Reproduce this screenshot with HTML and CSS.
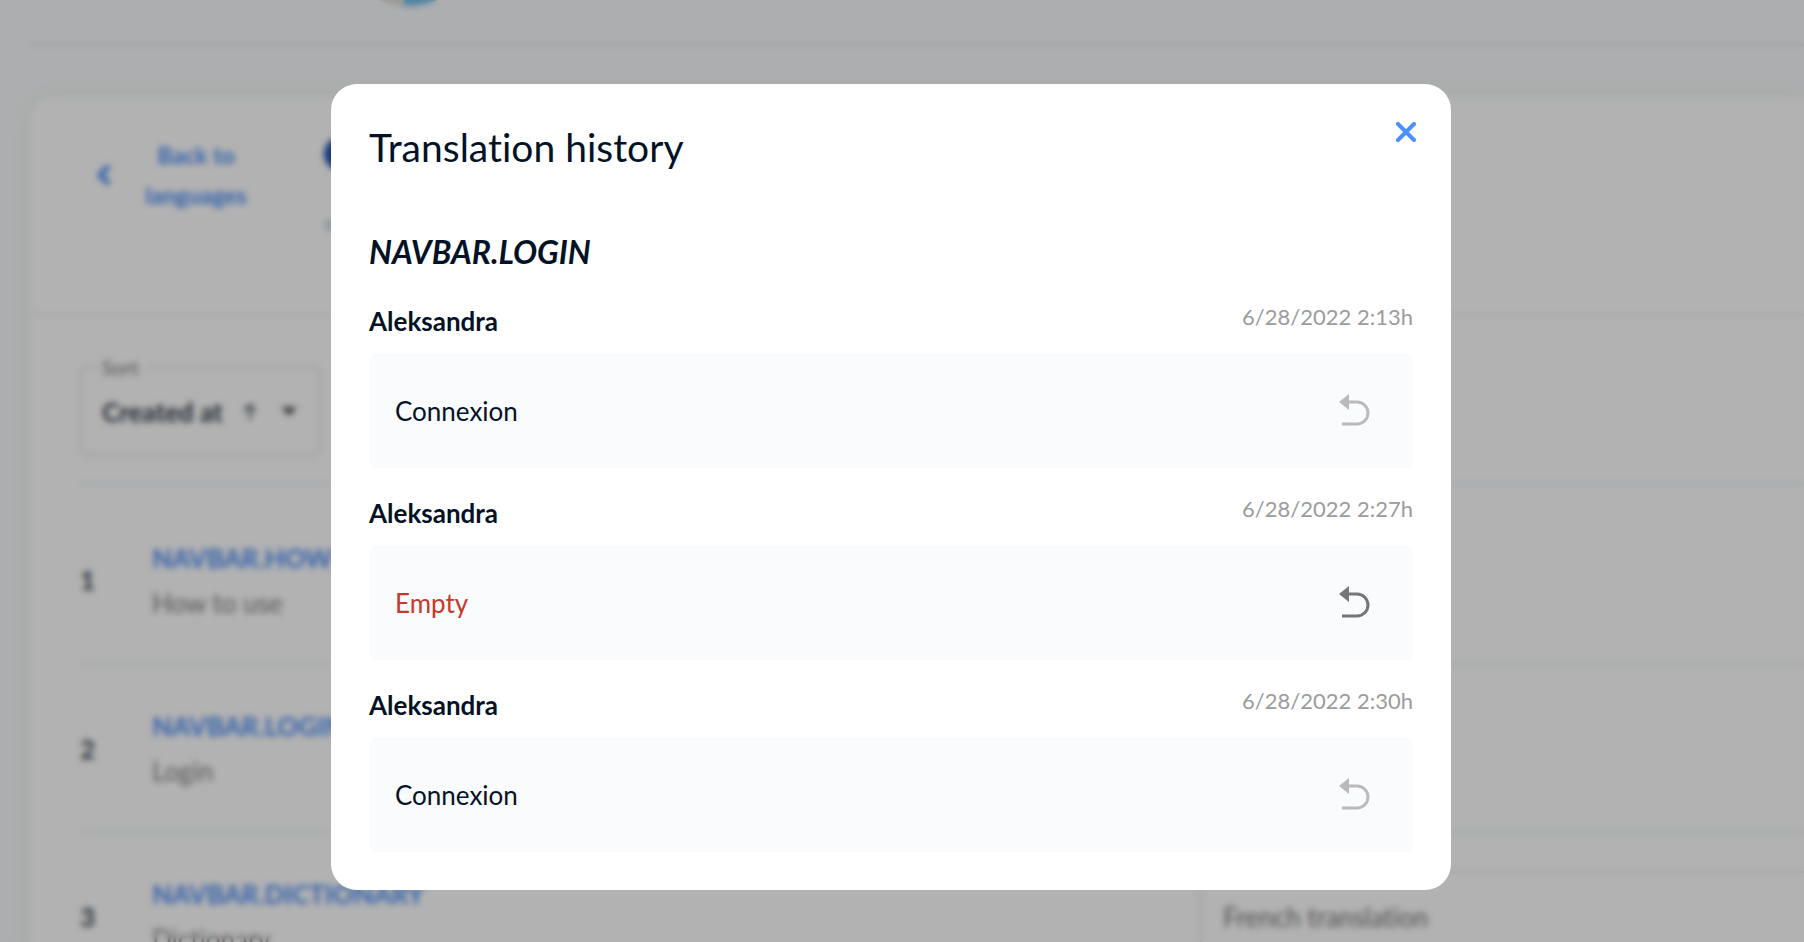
FILE: index.html
```
<!DOCTYPE html>
<html lang="en">
<head>
<meta charset="utf-8">
<title>Translation history</title>
<link rel="stylesheet" href="styles.css">
</head>
<body>
<div class="page" aria-hidden="true">
  <header class="topbar">
    <svg class="logo" width="152" height="152" viewBox="0 0 152 152"><circle cx="76" cy="76" r="76" fill="#dcdcd6"/><path d="M72 152V76h80a76 76 0 0 1-80 76z" fill="#74bdea"/></svg>
  </header>
  <main class="card">
    <section class="card-head">
      <a class="back" href="#">
        <svg width="16" height="22" viewBox="0 0 16 22" fill="none" stroke="currentColor" stroke-width="5"><path d="M13 2 4 11l9 9"/></svg>
        <span>Back to languages</span>
      </a>
      <div class="progress"><span class="flag"></span><span class="bar"></span></div>
    </section>
    <section class="card-body">
      <fieldset class="sort">
        <legend>Sort</legend>
        <span>Created at</span>
        <svg width="14" height="18" viewBox="0 0 14 18" fill="none" stroke="#444a55" stroke-width="2"><path d="M7 17V3M1 8l6-6 6 6"/></svg>
        <svg class="caret" width="16" height="9" viewBox="0 0 16 9"><path d="M0 0h16L8 9z" fill="#555"/></svg>
      </fieldset>
      <ol class="rows">
        <li class="row row-first"><b>1</b><div class="key"><a href="#">NAVBAR.HOW_TO_USE</a><span>How to use</span></div></li>
        <li class="row"><b>2</b><div class="key"><a href="#">NAVBAR.LOGIN</a><span>Login</span></div></li>
        <li class="row"><b>3</b><div class="key"><a href="#">NAVBAR.DICTIONARY</a><span>Dictionary</span></div><div class="field">French translation</div></li>
      </ol>
    </section>
  </main>
</div>
<div class="overlay">
  <section class="modal" role="dialog" aria-modal="true" aria-labelledby="title">
    <header class="modal-head">
      <h1 id="title">Translation history</h1>
      <button class="close" type="button" aria-label="Close"><svg width="22" height="20" viewBox="0 0 22 20" fill="none" stroke="currentColor" stroke-width="4" stroke-linecap="round"><path d="M3 2l16 16M19 2 3 18"/></svg></button>
    </header>
    <h2>NAVBAR.LOGIN</h2>
    <article class="entry">
      <header><h3>Aleksandra</h3><time>6/28/2022 2:13h</time></header>
      <div class="value"><span>Connexion</span><button class="undo" type="button" aria-label="Restore" disabled><svg width="32" height="34" viewBox="0 0 32 34"><path d="M1 8 11 0v16z" fill="currentColor"/><path d="M10 8h9a11 11 0 0 1 0 22H4" fill="none" stroke="currentColor" stroke-width="3"/></svg></button></div>
    </article>
    <article class="entry">
      <header><h3>Aleksandra</h3><time>6/28/2022 2:27h</time></header>
      <div class="value"><span class="empty">Empty</span><button class="undo" type="button" aria-label="Restore"><svg width="32" height="34" viewBox="0 0 32 34"><path d="M1 8 11 0v16z" fill="currentColor"/><path d="M10 8h9a11 11 0 0 1 0 22H4" fill="none" stroke="currentColor" stroke-width="3"/></svg></button></div>
    </article>
    <article class="entry">
      <header><h3>Aleksandra</h3><time>6/28/2022 2:30h</time></header>
      <div class="value"><span>Connexion</span><button class="undo" type="button" aria-label="Restore" disabled><svg width="32" height="34" viewBox="0 0 32 34"><path d="M1 8 11 0v16z" fill="currentColor"/><path d="M10 8h9a11 11 0 0 1 0 22H4" fill="none" stroke="currentColor" stroke-width="3"/></svg></button></div>
    </article>
  </section>
</div>
</body>
</html>
```
FILE: styles.css
```
* { box-sizing: border-box; }
html, body { height: 100%; }
body {
  margin: 0;
  overflow: hidden;
  background: #f8fafc;
  color: #041226;
  font-family: Lato, "Open Sans", sans-serif;
  font-size: 26px;
  font-variant-ligatures: none;
}
h1, h2, h3, ol { margin: 0; padding: 0; }
a { color: #4a8df6; text-decoration: none; }
button { border: 0; padding: 0; background: none; font: inherit; cursor: pointer; }
svg { display: block; }

.page { height: 100%; overflow: hidden; padding-left: 30px; }
.topbar {
  display: flex;
  align-items: flex-end;
  height: 46px;
  padding: 0 0 37px 302px;
  border-bottom: 3px solid #e3eaeb;
}
.logo { flex: none; }
.card {
  margin-top: 51px;
  background: #fff;
  border-radius: 24px 0 0 0;
  box-shadow: 0 0 26px #ebf1ec;
}
.card-head {
  display: flex;
  gap: 66px;
  height: 219px;
  padding: 38px 0 0 66px;
  border-bottom: 3px solid #f1f3f7;
}
.back {
  display: flex;
  align-items: center;
  align-self: flex-start;
  gap: 22px;
  font-size: 23px;
  font-weight: 700;
  line-height: 40px;
  text-align: center;
}
.back span { width: 124px; }
.progress { display: flex; flex-direction: column; gap: 48px; padding-top: 2px; }
.flag { width: 34px; height: 34px; border-radius: 50%; background: #1f4fb4; }
.bar { width: 150px; height: 12px; border-radius: 6px; background: #cfdde2; }
.card-body { padding: 41px 0 0 50px; }
.sort {
  display: flex;
  align-items: center;
  gap: 20px;
  width: 241px;
  height: 99px;
  margin: 0 0 26px;
  padding: 0 20px 8px;
  border: 2px solid #e2e2e2;
  border-radius: 8px;
  font-weight: 700;
  color: #333c4a;
  white-space: nowrap;
}
.sort legend { padding: 0 8px 0 0; font-size: 20px; line-height: 20px; font-weight: 400; color: #777; }
.caret { margin-left: 4px; }
.rows { list-style: none; }
.row {
  display: grid;
  grid-template-columns: 72px 1048px 1fr;
  align-items: center;
  height: 168px;
  border-top: 3px solid #f0f3f6;
}
.row-first { height: 181px; padding-top: 12px; }
.row b { font-size: 26px; color: #3c4554; }
.key { display: flex; flex-direction: column; gap: 5px; line-height: 40px; }
.key a { font-weight: 700; }
.key span { color: #808080; }
.field {
  height: 92px;
  padding-left: 21px;
  border: 2px solid #e8e8e8;
  border-right: 0;
  border-radius: 8px 0 0 8px;
  color: #777;
  line-height: 88px;
}

.overlay {
  position: fixed;
  inset: 0;
  display: flex;
  justify-content: center;
  align-items: flex-start;
  padding: 84px 22px 0 0;
  background: rgba(0, 0, 0, .3);
  backdrop-filter: blur(3px);
}
.modal {
  width: 100%;
  max-width: 1120px;
  padding: 38px;
  border-radius: 26px;
  background: #fff;
}
.modal-head { display: flex; justify-content: space-between; align-items: flex-start; }
.modal h1 { font-size: 39px; font-weight: 400; line-height: 50px; }
.close { color: #4a90ff; margin-right: -4px; }
.modal h2 { margin: 58px 0 2px; font-size: 32px; font-style: italic; font-weight: 700; line-height: 44px; }
.entry header { display: flex; justify-content: space-between; padding: 27px 0 14px; line-height: 36px; }
.entry h3 { font-size: 26px; }
.entry time { font-size: 22px; line-height: 28px; color: #9b9b9b; }
.value {
  display: flex;
  justify-content: space-between;
  align-items: center;
  height: 115px;
  padding: 0 43px 0 26px;
  border-radius: 8px;
  background: #fafbfd;
}
.empty { color: #c9372c; }
.undo { color: #757679; }
.undo:disabled { color: #bababc; cursor: default; }
```
